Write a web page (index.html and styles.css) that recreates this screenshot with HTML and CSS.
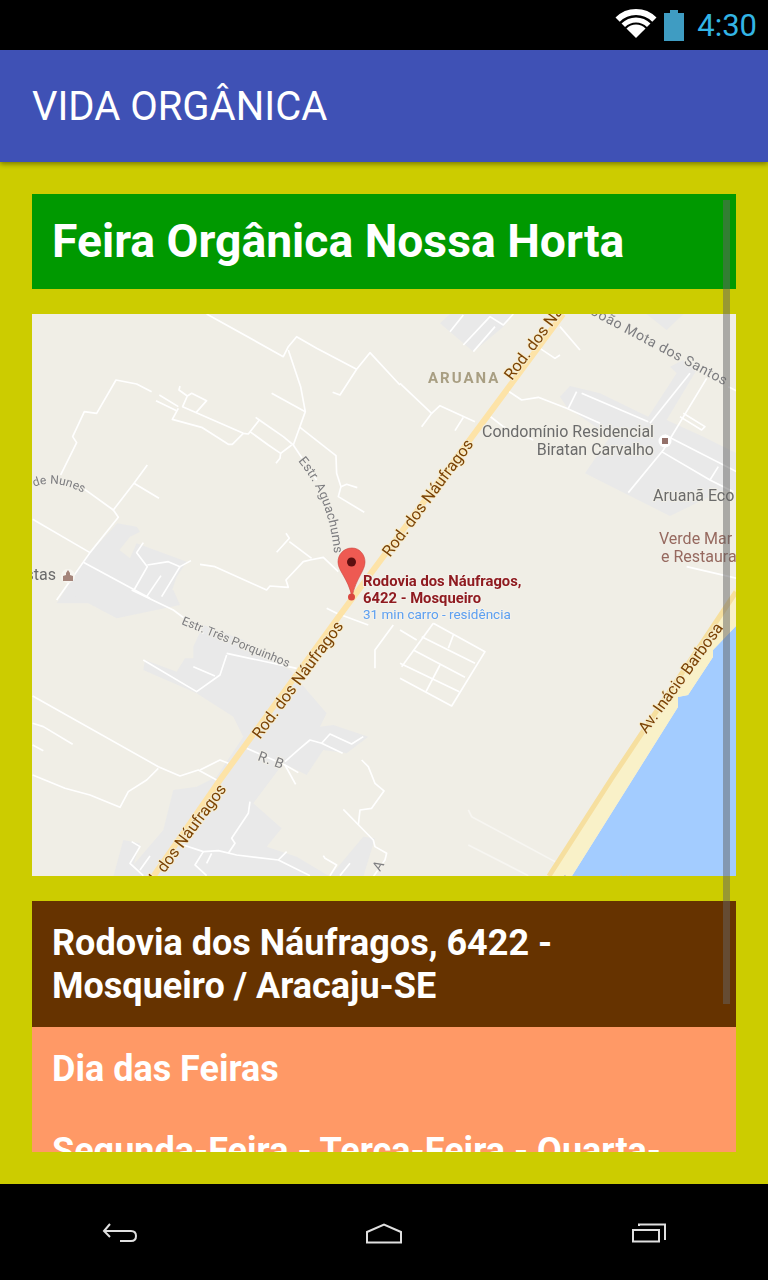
FILE: index.html
```html
<!DOCTYPE html>
<html lang="pt">

<head>
  <meta charset="UTF-8" />
  <meta name="viewport" content="width=device-width, initial-scale=1.0" />
  <title>Vida Orgânica</title>
  <link rel="stylesheet" href="styles.css">
</head>

<body>
  <div class="screen">
    <div class="status-bar">
      <svg class="wifi" width="42" height="32" viewBox="0 0 42 32">
        <path class="wifi-outer" d="M2.620 10.620 A26 26 0 0 1 39.380 10.620" />
        <path class="wifi-inner" d="M8.270 16.270 A18 18 0 0 1 33.730 16.270" />
        <path d="M21 29 L11.450 19.450 A13.500 13.500 0 0 1 30.550 19.450 Z" fill="#fff" />
      </svg>
      <svg class="battery" width="20" height="31" viewBox="0 0 20 31">
        <path d="M6 0 H14 V3 H20 V31 H0 V3 H6 Z" fill="#3f9cc2" />
      </svg>
      <span class="clock">4:30</span>
    </div>

    <div class="app-bar">VIDA ORGÂNICA</div>

    <div class="content">
      <div class="scroll-area">
        <h1 class="title">Feira Orgânica Nossa Horta</h1>

        <svg class="map" width="704" height="562" viewBox="32 314 704 562">
          <rect x="32" y="314" width="704" height="562" fill="#f0eee6" />

          <!-- built-up areas -->
          <g class="areas">
            <g transform="translate(30 310) scale(.3333)">
              <polygon points="170,740 262,640 320,650 330,665 300,680 268,720 300,745 320,700 470,755 440,800 420,860 450,880 80,880" />
            </g>
            <g transform="translate(30 590) scale(.3333)">
              <polygon points="100,0 260,85 450,45 430,0" />
              <polygon points="490,170 520,105 640,150 780,240 830,300 890,370 870,410 910,405 1015,440 950,490 880,480 830,555 760,520 670,640 755,715 710,770 800,800 900,860 280,860 400,720 430,600 500,590 560,560 640,440 610,380 500,310 340,240 345,210 440,245 465,205 490,205" />
              <polygon points="900,860 1000,740 1035,745 1000,860" />
              <polygon points="280,750 330,760 300,860 250,860" />
            </g>
            <g transform="translate(400 310) scale(.3333)">
              <polygon points="120,40 150,12 340,12 310,50 220,125" />
              <polygon points="740,12 850,12 800,60" />
              <polygon points="480,260 510,228 600,250 745,320 830,190 810,170 850,150 890,180 800,330 910,380 1010,430 1010,540 960,545 810,618 555,490 630,380 500,290" />
            </g>
          </g>

          <!-- water and shore -->
          <polygon points="572,876 678,707 678,697 688,695 713,657 713,650 736,626 736,876" fill="#a3ccff" />
          <polygon points="547,876 736,587 736,626 713,650 713,657 688,695 678,697 678,707 572,876" fill="#f9f1c8" />
          <polyline class="avenue" points="549,876 612,778 736,592" />

          <!-- streets -->
          <g class="streets" transform="translate(30 310) scale(.3333)">
            <polyline points="530,12 760,140 775,110 800,80 860,115 980,178 1020,128 1110,225" />
            <polyline points="980,178 930,255 908,247" />
            <polyline points="775,120 812,230 826,305 790,405" />
            <polyline points="725,250 826,305" />
            <polyline points="810,352 918,437 920,490 933,530 925,560 1003,607" />
            <polyline points="933,530 950,523 982,533" />
            <polyline points="365,245 320,222 258,210 200,310 163,305 128,380 140,398 92,495" />
            <polyline points="388,255 445,290" />
            <polyline points="378,272 440,302" />
            <polyline points="450,228 447,240 472,258 458,290 640,370 655,372 688,330 677,322" />
            <polyline points="472,258 485,250 530,272 498,308" />
            <polyline points="445,295 427,328 515,352 595,403 607,403 640,370" />
            <polyline points="688,330 760,380 790,405 860,510" />
            <polyline points="660,365 715,405 752,430 785,405" />
            <polyline points="752,430 750,445 738,460" />
            <polyline points="352,465 312,520 250,600 265,622 180,728 80,870" />
            <polyline points="312,520 387,565" />
            <polyline points="160,535 250,600" />
            <polyline points="8,628 180,728" />
            <polyline points="160,757 360,865" />
            <polyline points="340,698 320,728 352,770 312,840" />
            <polyline points="352,765 415,755 450,770 483,752" />
            <polyline points="450,770 395,860" />
            <polyline points="393,797 350,860" />
            <polyline points="510,763 555,770 710,840 720,828 775,832 768,810 820,755 840,750 880,742 925,785" />
            <polyline points="768,670 778,685 740,727" />
            <polyline points="778,695 845,745" />
          </g>
          <g class="streets" transform="translate(30 590) scale(.3333)">
            <polyline points="8,318 385,530 450,558 505,540 560,570" />
            <polyline points="8,400 40,410 128,463" />
            <polyline points="8,465 40,482" />
            <polyline points="8,555 105,595 180,615 270,652 295,605 350,570 385,535" />
            <polyline points="510,540 570,510 595,520" />
            <polyline points="340,210 500,305 570,255 590,195" />
            <polyline points="490,230 555,258" />
            <polyline points="650,475 765,525 805,548" />
            <polyline points="765,525 797,583" />
            <polyline points="765,515 810,475 840,450 875,460 900,432 965,462 1000,440" />
            <polyline points="875,460 938,490" />
            <polyline points="995,510 1015,530 1035,580 1062,603 1025,655 990,660 985,705" />
            <polyline points="940,658 1030,750 1035,770 1070,790 1065,810 1030,860" />
            <polyline points="660,635 655,670 605,745 615,760 595,790" />
            <polyline points="460,765 520,785 565,782 620,795 745,810 840,857" />
            <polyline points="745,810 770,785" />
            <polyline points="520,785 495,825 530,857" />
            <polyline points="545,790 530,820" />
            <polyline points="880,797 885,805 920,825 900,857" />
            <polyline points="305,755 330,770 300,820 340,857" />
            <polyline points="360,798 330,840" />
            <polyline points="960,820 930,857" />
            <polyline points="1090,105 1035,180 1035,235" />
            <polyline points="890,55 920,70 1015,105" />
            <polyline points="305,0 430,60 470,90 520,130" />
            <polyline points="590,190 800,235" />
          </g>
          <g class="streets" transform="translate(400 310) scale(.3333)">
            <polyline points="150,65 190,15" />
            <polyline points="190,105 270,20 310,45 340,12" />
            <polyline points="220,125 285,50" />
            <polyline points="505,295 530,245" />
            <polyline points="545,250 745,335" />
            <polyline points="320,240 365,270 415,262 500,295 600,340" />
            <polyline points="685,548 790,420 920,205" />
            <polyline points="750,340 870,190" />
            <polyline points="850,310 915,350 905,360 840,320" />
            <polyline points="795,375 1010,485" />
            <polyline points="785,425 930,510 955,470" />
            <polyline points="930,510 1000,545" />
            <polyline points="0,220 95,310 65,350" />
            <polyline points="95,310 120,287 225,335" />
            <polyline points="190,322 165,362" />
            <polyline points="265,315 310,350 400,390" />
            <polyline points="420,115 465,145 480,135" />
            <polyline points="480,50 540,120" />
            <polyline points="860,770 1010,805" />
            <polyline points="985,230 1010,243" />
          </g>
          <g class="streets" transform="translate(400 590) scale(.3333)">
            <polyline points="0,120 50,150" />
            <polyline points="100,100 255,185 155,348 0,265" />
            <polyline points="100,100 5,230" />
            <polyline points="65,140 225,220" />
            <polyline points="40,180 195,262" />
            <polyline points="0,220 178,305" />
            <polyline points="160,135 145,175" />
            <polyline points="120,225 78,305" />
          </g>
          <g class="streets faint" transform="translate(400 590) scale(.3333)">
            <polyline points="205,660 215,680 465,815" />
            <polyline points="205,765 385,857" />
          </g>

          <polyline class="highway" points="153,877 220,780 340,615 563,314" />

          <!-- road labels -->
          <text class="road-label" text-anchor="middle" transform="translate(432 501) rotate(-53.500)">Rod. dos Náufragos</text>
          <text class="road-label" transform="translate(512 381) rotate(-53.500)">Rod. dos Náufragos</text>
          <text class="road-label" text-anchor="middle" transform="translate(302 683) rotate(-53.500)">Rod. dos Náufragos</text>
          <text class="road-label" text-anchor="end" transform="translate(227 789) rotate(-53.500)">Rod. dos Náufragos</text>
          <text class="road-label" text-anchor="middle" transform="translate(685 681) rotate(-54)">Av. Inácio Barbosa</text>

          <!-- street and place labels -->
          <text class="street-label" transform="translate(590 314) rotate(28)">João Mota dos Santos</text>
          <text class="street-label small" transform="translate(181 624) rotate(22)">Estr. Três Porquinhos</text>
          <text class="street-label" transform="translate(257 760) rotate(20)">R. B</text>
          <text class="street-label" transform="translate(380 872) rotate(-60)">A</text>
          <text class="street-label medium"><textPath href="#aguachums">Estr. Aguachums</textPath></text>
          <text class="street-label small"><textPath href="#nunes">de Nunes</textPath></text>
          <path id="aguachums" class="guide" d="M298 461 Q335 505 335 575" />
          <path id="nunes" class="guide" d="M34 487 Q58 477 90 497" />

          <text class="district" x="428" y="383">ARUANA</text>
          <text class="place" x="654" y="437" text-anchor="end">Condomínio Residencial</text>
          <text class="place" x="654" y="455" text-anchor="end">Biratan Carvalho</text>
          <text class="place" x="653" y="501">Aruanã Eco</text>
          <text class="place food" x="659" y="544">Verde Mar</text>
          <text class="place food" x="661" y="562">e Restaurante</text>
          <text class="place" x="56" y="580" text-anchor="end">Batistas</text>

          <circle cx="68" cy="576" r="7" fill="#f7f5f0" />
          <path d="M68 570 l2 3 v2 l3 1 v5 h-10 v-5 l3 -1 v-2 Z" fill="#a5857b" />
          <circle cx="665" cy="441" r="6.500" fill="#fff" />
          <rect x="662" y="438" width="6" height="6" fill="#94716a" />

          <!-- pin and its label -->
          <path d="M352 548 C343 548 338 555 338 562 C338 571 348 578 352 597 C356 578 365 571 365 562 C365 555 360 548 352 548 Z" fill="#ee5a52" stroke="#c9443e" stroke-width=".6" />
          <circle cx="351.500" cy="562" r="4.500" fill="#5c0f10" />
          <circle cx="351.500" cy="597" r="3.500" fill="#d9473f" />
          <text class="pin-label" x="363" y="586">Rodovia dos Náufragos,</text>
          <text class="pin-label" x="363" y="603">6422 - Mosqueiro</text>
          <text class="pin-note" x="363" y="619">31 min carro - residência</text>

          <text class="watermark" x="560" y="886">Ativar o Windows</text>
        </svg>

        <div class="address">Rodovia dos Náufragos, 6422 - Mosqueiro / Aracaju-SE</div>

        <div class="days">
          <p>Dia das Feiras</p>
          <p>Segunda-Feira - Terça-Feira - Quarta-Feira</p>
        </div>

        <div class="scrollbar"></div>
      </div>
    </div>

    <div class="nav-bar">
      <svg width="36" height="20" viewBox="0 0 36 20">
        <path class="nav-icon" d="M8 1 L2 8 L8 14 M2 8 H29 Q34 8 34 13 Q34 18 29 18 H18" />
      </svg>
      <svg class="nav-home" width="38" height="21" viewBox="0 0 38 21">
        <path class="nav-icon" d="M2 19.500 V9 L19 1.500 L36 9 V19.500 Z" />
      </svg>
      <svg width="36" height="20" viewBox="0 0 36 20">
        <path class="nav-icon" d="M8 3 V1.500 H34 V17" />
        <rect class="nav-icon" x="2" y="7" width="26" height="11.500" />
      </svg>
    </div>
  </div>
</body>

</html>
```

FILE: styles.css
```css
html,
body {
  margin: 0;
  padding: 0;
  background-color: #000;
}

body {
  font-family: Roboto, "Liberation Sans", sans-serif;
}

.screen {
  display: flex;
  flex-direction: column;
  width: 768px;
  height: 1280px;
  overflow: hidden;
}

.status-bar {
  display: flex;
  align-items: center;
  justify-content: flex-end;
  height: 50px;
  padding-right: 11px;
  background-color: #000;
}

.wifi {
  margin-right: 7px;
}

.wifi-outer,
.wifi-inner {
  fill: none;
  stroke: #fff;
}

.wifi-outer {
  stroke-width: 6;
}

.wifi-inner {
  stroke-width: 5;
}

.battery {
  margin-right: 13px;
}

.clock {
  font-size: 31px;
  color: #33b5e5;
}

.app-bar {
  position: relative;
  z-index: 1;
  display: flex;
  align-items: center;
  height: 112px;
  padding-left: 32px;
  font-size: 40px;
  color: #fff;
  background-color: #3f51b5;
  box-shadow: 0 2px 5px rgba(0, 0, 0, 0.4);
}

.content {
  flex: 1;
  min-height: 0;
  padding: 32px;
  background-color: #cccc00;
}

.scroll-area {
  position: relative;
  height: 100%;
  overflow: hidden;
}

.title {
  margin: 0 0 25px;
  padding: 20px;
  height: 55px;
  font-size: 46.250px;
  font-weight: bold;
  line-height: 55px;
  color: #fff;
  background-color: #009900;
}

.map {
  display: block;
  margin-bottom: 25px;
  filter: blur(0.4px);
}

.address {
  padding: 21px 20px 19px;
  font-size: 36px;
  font-weight: bold;
  line-height: 43px;
  color: #fff;
  background-color: #663300;
}

.days {
  padding: 21px 20px 19px;
  font-size: 36px;
  font-weight: bold;
  line-height: 43px;
  color: #fff;
  background-color: #ff9966;
}

.days p {
  margin: 0 0 39px;
}

.scrollbar {
  position: absolute;
  top: 6px;
  right: 6px;
  width: 7px;
  height: 804px;
  background-color: rgba(100, 100, 100, 0.5);
}

.nav-bar {
  display: flex;
  justify-content: space-between;
  align-items: flex-start;
  height: 96px;
  padding: 39px 101px 0 102px;
  background-color: #000;
  box-sizing: border-box;
}

.nav-home {
  margin-left: -2px;
}

.nav-icon {
  fill: none;
  stroke: #e0e0e0;
  stroke-width: 2;
}

/* map drawing */
.areas polygon {
  fill: #e9e9e9;
}

.streets polyline {
  fill: none;
  stroke: #fff;
  stroke-width: 5;
  stroke-linejoin: round;
}

.streets.faint polyline {
  stroke: #f7f6f2;
}

.highway {
  fill: none;
  stroke: #fde3a7;
  stroke-width: 6;
}

.avenue {
  fill: none;
  stroke: #f6df9f;
  stroke-width: 5;
}

.guide {
  fill: none;
}

.map text {
  paint-order: stroke;
  stroke-linejoin: round;
}

.road-label {
  font-size: 16px;
  fill: #7a4204;
  stroke: #f7eccb;
  stroke-width: 2;
}

.street-label {
  font-size: 14px;
  letter-spacing: 0.6px;
  fill: #7d7d80;
  stroke: #f0eee6;
  stroke-width: 2;
}

.street-label.small {
  font-size: 12px;
  letter-spacing: 0.1px;
}

.street-label.medium {
  font-size: 13px;
  letter-spacing: 0.2px;
}

.district {
  font-size: 15px;
  font-weight: bold;
  letter-spacing: 2px;
  fill: #a89e82;
}

.place {
  font-size: 16px;
  fill: #6b6b6b;
  stroke: #f0eee6;
  stroke-width: 2;
}

.place.food {
  fill: #96695f;
}

.pin-label {
  font-size: 14.800px;
  font-weight: bold;
  fill: #8f1b20;
  stroke: #f4f2ec;
  stroke-width: 2;
}

.pin-note {
  font-size: 13.500px;
  fill: #5c9ff0;
  stroke: #f4f2ec;
  stroke-width: 2;
}

.watermark {
  font-size: 15px;
  fill: #c9c9c9;
}
```
